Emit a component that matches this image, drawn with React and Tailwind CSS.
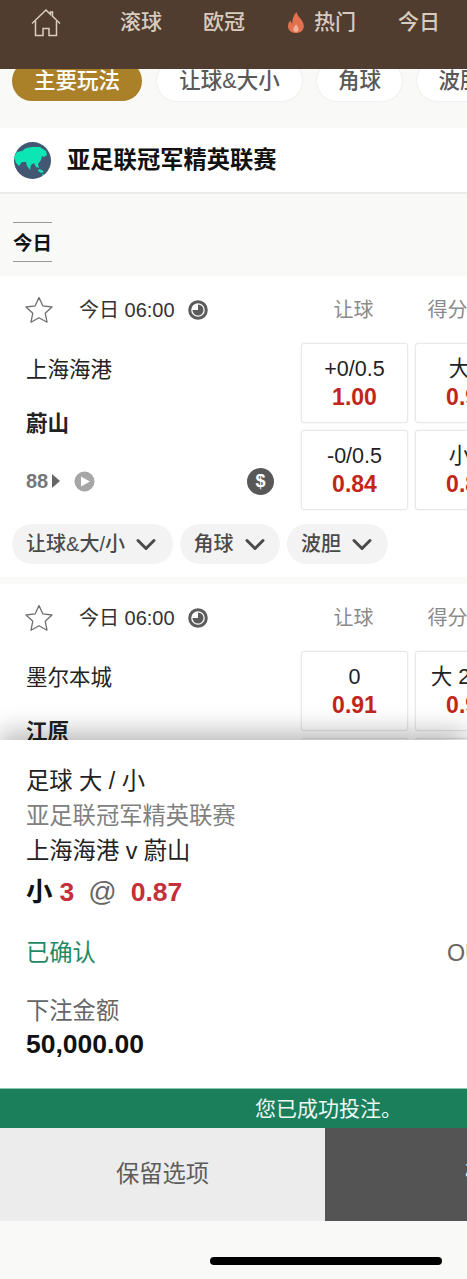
import React from "react";

const FONT = { fontFamily: '"Liberation Sans", "Noto Sans CJK SC", sans-serif' };

function House() {
  return (
    <svg width="30" height="28" viewBox="0 0 30 28" fill="none" stroke="#d9cdbf" strokeWidth="1.5" className="shrink-0">
      <path d="M1 14.5 15 1l4.5 4.5V3h2v4.2L29 14.5" />
      <path d="M4.5 12v14.5h7.5v-7h6v7h7.5V12" />
    </svg>
  );
}

function Flame() {
  return (
    <svg width="16" height="21" viewBox="0 0 16 21" className="shrink-0">
      <path fill="#e2714f" d="M8.5 0c.6 3.600 3 5.200 5 8 1.600 2.300 2.300 4.300 2.300 6.200C15.800 18.300 12.400 21 8 21s-8-2.700-8-6.800c0-2.400 1-4.400 2.600-6 .1 1.500.6 2.500 1.600 3.300C4.300 7.200 5.500 3.200 8.500 0Z" />
      <path fill="#f0b29a" d="M8 12c.3 1.500 2.600 2.900 2.600 5.200C10.600 19 9.500 20 8 20s-2.700-1-2.700-2.800c0-2 2.300-3.300 2.700-5.200Z" />
    </svg>
  );
}

function Globe() {
  return (
    <svg width="37" height="37" viewBox="0 0 37 37" className="shrink-0">
      <circle cx="18.500" cy="18.500" r="18.500" fill="#435672" />
      <path fill="#0ce5b4" d="M0 15 3 10l5-1 4-3 6-1 8 0 6 4 1 4-3 2-2-1-1 4-3 4 1 4-3-1-2-4-3 2-1 5-3-4-1-4-4 0-3 4-3-3Z" />
      <path fill="#0ce5b4" d="M25 27l3 1 2 2-3 1-3-2ZM28 32h2l-2 2Z" />
    </svg>
  );
}

function Star() {
  return (
    <svg width="28" height="28" viewBox="0 0 28 28" fill="none" stroke="#6f6f6f" strokeWidth="1.300" strokeLinejoin="round" className="shrink-0">
      <path d="M14 1.500 17.800 9.800 27 11 20.200 17.200 22 26.200 14 21.700 6 26.200 7.800 17.200 1 11 10.200 9.800Z" />
    </svg>
  );
}

function LiveClock() {
  return (
    <svg width="20" height="20" viewBox="0 0 20 20" className="shrink-0">
      <circle cx="10" cy="10" r="8.300" fill="none" stroke="#5c5c5c" strokeWidth="3" />
      <path fill="#5c5c5c" d="M10 4.500a5.500 5.500 0 1 1-5.500 5.500H10Z" />
    </svg>
  );
}

function Chevron() {
  return (
    <svg width="20" height="13" viewBox="0 0 20 13" fill="none" stroke="#4a4a4a" strokeWidth="3" strokeLinecap="round" strokeLinejoin="round" className="shrink-0">
      <path d="M2 2.500 10 10.500 18 2.500" />
    </svg>
  );
}

function Odds({ line, price }) {
  return (
    <div className="flex h-[80px] w-[107px] shrink-0 flex-col items-center justify-center whitespace-nowrap rounded-[3px] border border-[#e8e8e8] bg-white shadow-[0_0_2px_rgba(0,0,0,0.08)]">
      <div className="text-[21.5px] leading-[27px] text-[#222]">{line}</div>
      <div className="text-[23px] font-bold leading-[28px] text-[#c1261b]">{price}</div>
    </div>
  );
}

function Match({ home, away, odds, extras }) {
  return (
    <section className="h-[301px] shrink-0 bg-white">
      <div className="flex h-[67px] items-center pl-[25px]">
        <Star />
        <span className="ml-[26px] w-[95px] whitespace-nowrap text-[20px] text-[#333]">今日 06:00</span>
        <span className="ml-[14px]"><LiveClock /></span>
        <span className="ml-[92px] w-[107px] shrink-0 text-center text-[20px] text-[#8a8a8a]">让球</span>
        <span className="ml-[7px] w-[107px] shrink-0 whitespace-nowrap text-center text-[20px] text-[#8a8a8a]">得分大小</span>
      </div>
      <div className="flex">
        <div className="flex h-[167px] w-[301px] shrink-0 flex-col pl-[26px] pr-[27px]">
          <div className="mt-[12px] text-[21.5px] leading-[30px] text-[#222]">{home}</div>
          <div className="mt-[24px] text-[21.5px] font-bold leading-[30px] text-[#222]">{away}</div>
          {extras}
        </div>
        <div className="grid w-[222px] shrink-0 grid-cols-[107px_107px] gap-x-[7px] gap-y-[7px]">
          {odds.map((o, i) => (
            <Odds key={i} line={o[0]} price={o[1]} />
          ))}
        </div>
      </div>
      <div className="mt-[14px] flex gap-[7px] pl-[12px]">
        {[
          ["让球&大/小", "w-[161px] pr-[3px]"],
          ["角球", "w-[100px] pr-[2px]"],
          ["波胆", "w-[101px] pr-[2px]"],
        ].map(([t, w]) => (
          <div key={t} className={`flex h-[40px] items-center justify-center gap-[11px] rounded-full bg-[#f3f3f3] text-[20px] font-medium text-[#4a4a4a] ${w}`}>
            {t}
            <Chevron />
          </div>
        ))}
      </div>
    </section>
  );
}

export default function App() {
  return (
    <div style={FONT} className="relative h-[1279px] w-[467px] overflow-hidden bg-[#f9f9f7]">
      <header className="relative z-10 flex h-[69px] items-start bg-[#503d30] text-[21px] font-medium text-[#d8ccbf]">
        <div className="ml-[31px] mt-[9px]"><House /></div>
        <span className="ml-[59px] mt-[6px] whitespace-nowrap">滚球</span>
        <span className="ml-[41px] mt-[6px] whitespace-nowrap">欧冠</span>
        <span className="ml-[43px] mt-[12px]"><Flame /></span>
        <span className="ml-[10px] mt-[6px] whitespace-nowrap">热门</span>
        <span className="ml-[42px] mt-[6px] whitespace-nowrap">今日</span>
      </header>

      <nav className="-mt-[8px] flex h-[40px] gap-[15px] whitespace-nowrap pl-[12px] text-[21.5px] font-medium">
        <div className="flex w-[130px] shrink-0 items-center justify-center rounded-full bg-[#aa8129] pt-[1px] text-white">主要玩法</div>
        <div className="flex w-[145px] shrink-0 items-center justify-center rounded-full bg-white pt-[1px] text-[#595959] shadow-[0_0_2px_rgba(0,0,0,0.12)]">让球&amp;大小</div>
        <div className="flex w-[85px] shrink-0 items-center justify-center rounded-full bg-white pt-[1px] text-[#595959] shadow-[0_0_2px_rgba(0,0,0,0.12)]">角球</div>
        <div className="flex w-[86px] shrink-0 items-center justify-center rounded-full bg-white pt-[1px] text-[#595959] shadow-[0_0_2px_rgba(0,0,0,0.12)]">波胆</div>
      </nav>

      <div className="mt-[27px] flex h-[66px] items-center border-b-2 border-[#ececec] bg-white pl-[14px]">
        <Globe />
        <h1 className="ml-[16px] whitespace-nowrap text-[23.300px] font-bold text-[#111]">亚足联冠军精英联赛</h1>
      </div>

      <div className="flex h-[82px] items-start pl-[13px]">
        <div className="mt-[28px] flex h-[40px] w-[39px] items-center justify-center whitespace-nowrap border-y border-[#9a9a9a] pt-[3px] text-[19.500px] font-bold leading-none text-[#111]">今日</div>
      </div>

      <Match
        home="上海海港"
        away="蔚山"
        odds={[["+0/0.5", "1.00"], ["大 3", "0.95"], ["-0/0.5", "0.84"], ["小 3", "0.87"]]}
        extras={
          <div className="mt-[27px] flex items-center text-[20px] font-bold text-[#777]">
            <span>88</span>
            <svg width="8" height="14" viewBox="0 0 8 14" className="ml-[4px]"><path fill="#666" d="M0 0l8 7-8 7Z" /></svg>
            <svg width="21" height="21" viewBox="0 0 21 21" className="ml-[14px]">
              <circle cx="10.500" cy="10.500" r="10" fill="#a6a6a6" />
              <path fill="#fff" d="M7 5.500 16 10.500 7 15.500Z" />
            </svg>
            <span className="ml-auto flex h-[27px] w-[27px] items-center justify-center rounded-full bg-[#585858] text-[18px] font-bold text-white">$</span>
          </div>
        }
      />

      <div className="h-[7px]" />

      <Match
        home="墨尔本城"
        away="江原"
        odds={[["0", "0.91"], ["大 2.5/3", "0.93"], ["-0", "0.91"], ["小 2.5/3", "0.89"]]}
      />

      <aside className="absolute inset-x-0 bottom-0 top-[740px] z-20 flex flex-col bg-white shadow-[0_-8px_24px_rgba(0,0,0,0.28)]">
        <div className="h-[348px] pl-[26px] pt-[24px]">
          <div className="whitespace-nowrap text-[23.300px] leading-[35px] text-[#222]">足球 大 / 小</div>
          <div className="whitespace-nowrap text-[23.300px] leading-[35px] text-[#808080]">亚足联冠军精英联赛</div>
          <div className="whitespace-nowrap text-[23.300px] leading-[35px] text-[#222]">上海海港 v 蔚山</div>
          <div className="mt-[2px] flex items-baseline whitespace-nowrap text-[26.500px] font-bold leading-[41px]">
            <span className="text-[#111]">小</span>
            <span className="ml-[7px] text-[#c4303a]">3</span>
            <span className="ml-[14px] text-[28px] font-normal text-[#666]">@</span>
            <span className="ml-[14px] text-[#c4303a]">0.87</span>
          </div>
          <div className="mt-[20px] flex whitespace-nowrap text-[23.300px] leading-[41px]">
            <span className="w-[421px] shrink-0 text-[#1f8a66]">已确认</span>
            <span className="text-[#666]">OU123</span>
          </div>
          <div className="mt-[21px] text-[23.300px] leading-[33px] text-[#666]">下注金额</div>
          <div className="text-[26.500px] font-bold leading-[32px] text-[#111]">50,000.00</div>
        </div>
        <div className="flex h-[40px] items-center whitespace-nowrap border-t border-[#8cc7b2] bg-[#1b7f5b] pl-[255px] text-[21px] text-[#eef7f3]">您已成功投注。</div>
        <div className="flex h-[93px]">
          <div className="flex w-[325px] items-center justify-center bg-[#ececec] text-[23.300px] text-[#5c5c5c]">保留选项</div>
          <div className="flex flex-1 items-center overflow-hidden whitespace-nowrap bg-[#545454] pl-[140px] text-[23px] text-white">确定</div>
        </div>
        <div className="flex-1 bg-[#f9f9f7] pl-[210px] pt-[36px]">
          <div className="h-[8px] w-[232px] rounded-full bg-black" />
        </div>
      </aside>
    </div>
  );
}
